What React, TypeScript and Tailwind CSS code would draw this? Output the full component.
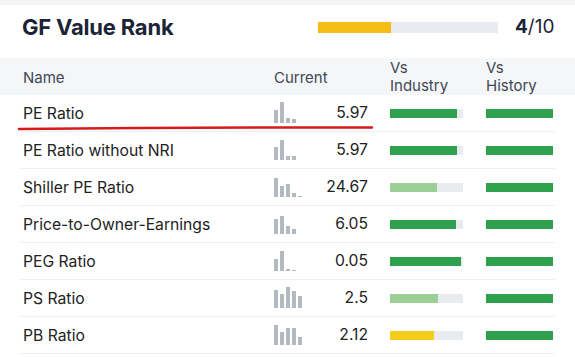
import React from 'react';

type Row = {
  name: string;
  value: string;
  spark: number[];
  industry: number;
  industryColor: string;
};

const rows: Row[] = [
  { name: 'PE Ratio', value: '5.97', spark: [13, 21, 5, 4], industry: 67, industryColor: 'bg-[#2fa04e]' },
  { name: 'PE Ratio without NRI', value: '5.97', spark: [13, 20, 4, 4], industry: 67, industryColor: 'bg-[#2fa04e]' },
  { name: 'Shiller PE Ratio', value: '24.67', spark: [19, 11, 13, 4, 1], industry: 47, industryColor: 'bg-[#9bcf95]' },
  { name: 'Price-to-Owner-Earnings', value: '6.05', spark: [15, 18, 8, 5], industry: 66, industryColor: 'bg-[#2fa04e]' },
  { name: 'PEG Ratio', value: '0.05', spark: [12, 20, 2, 1], industry: 71, industryColor: 'bg-[#2fa04e]' },
  { name: 'PS Ratio', value: '2.5', spark: [18, 14, 21, 17, 12], industry: 48, industryColor: 'bg-[#9bcf95]' },
  { name: 'PB Ratio', value: '2.12', spark: [20, 13, 17, 17, 8], industry: 44, industryColor: 'bg-[#f5cd1a]' },
];

// small bar sparkline next to the current value
const Spark = ({ data }: { data: number[] }) => (
  <div className="flex items-end gap-[2px] h-[21px]">
    {data.map((h, i) => (
      <div key={i} className="w-[4px] bg-[#b3b9c1]" style={{ height: h }} />
    ))}
  </div>
);

export default function App() {
  return (
    <div className="relative w-[575px] h-[357px] overflow-hidden bg-white font-['Inter',sans-serif] text-[#222]">
      <div className="h-[5px] bg-[#f3f4f6]" />

      {/* Title + rank */}
      <div className="flex items-center h-[53px] pb-[8px] pl-[22px]">
        <h2 className="w-[296px] text-[22px] font-bold text-[#1b2336] tracking-[-0.2px]">GF Value Rank</h2>
        <div className="w-[180px] h-[11px] bg-[#e8ecf0] flex">
          <div className="w-[73px] h-full bg-[#f7bd16]" />
        </div>
        <div className="ml-[17px] text-[19px] text-[#1b2336]">
          <span className="font-bold">4</span>/10
        </div>
      </div>

      {/* Table header */}
      <div className="bg-[#f5f6f7] h-[37px] px-[20px] flex items-center text-[15px] text-[#404855]">
        <div className="w-[254px] pl-[3px] pt-[3px]">Name</div>
        <div className="w-[116px] pt-[3px]">Current</div>
        <div className="w-[96px] leading-[18px]">Vs<br />Industry</div>
        <div className="w-[69px] leading-[18px]">Vs<br />History</div>
      </div>

      {/* Rows */}
      <div className="px-[20px]">
        {rows.map((r) => (
          <div key={r.name} className="h-[37px] flex items-center border-b border-[#eef0f2] text-[15.7px]">
            <div className="w-[254px] pl-[3px] pt-[1px]">{r.name}</div>
            <div className="w-[94px] flex items-center justify-between">
              <Spark data={r.spark} />
              <span>{r.value}</span>
            </div>
            <div className="w-[22px]" />
            <div className="w-[96px]">
              <div className="w-[73px] h-[9px] bg-[#e8ecef] flex">
                <div className={`h-full ${r.industryColor}`} style={{ width: r.industry }} />
              </div>
            </div>
            <div className="w-[69px]">
              <div className="w-[67px] h-[9px] bg-[#2fa04e]" />
            </div>
          </div>
        ))}
      </div>

      {/* hand drawn red underline annotation */}
      <svg className="absolute left-0 top-0" width="575" height="357">
        <path d="M19 129 Q 200 127 372 127.5" stroke="#d91a1a" strokeWidth="2.5" fill="none" strokeLinecap="round" />
      </svg>
    </div>
  );
}
